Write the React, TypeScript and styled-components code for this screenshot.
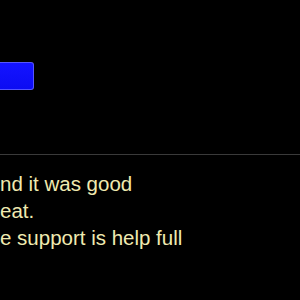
import React from 'react';
import styled, { createGlobalStyle } from 'styled-components';

const GlobalStyle = createGlobalStyle`
  html, body {
    margin: 0;
    padding: 0;
    background: #000;
  }
  body {
    font-family: 'Liberation Sans', Arial, sans-serif;
    overflow: hidden;
  }
`;

const Page = styled.div`
  width: 300px;
  height: 300px;
  background: #000;
  display: flex;
  flex-direction: column;
  padding-top: 62px;
  box-sizing: border-box;
`;

const SubmitButton = styled.button`
  width: 34px;
  height: 28px;
  padding: 0;
  background: linear-gradient(#1414ff, #0c0cf2);
  border: 1px solid #5555ff;
  border-left: none;
  border-radius: 0 3px 3px 0;
  cursor: pointer;
`;

const Divider = styled.hr`
  margin: 64px 0 0;
  border: none;
  border-top: 1px solid #3a3a3a;
  width: 100%;
`;

const Reviews = styled.div`
  display: flex;
  flex-direction: column;
  margin-top: 15px;
`;

const ReviewLine = styled.p`
  margin: 0;
  font-size: 20.5px;
  line-height: 27px;
  color: #f0eab0;
  white-space: nowrap;
`;

const reviews = ['nd it was good', 'eat.', 'e support is help full'];

export default function App() {
  return (
    <>
      <GlobalStyle />
      <Page>
        <SubmitButton aria-label="Submit" />
        <Divider />
        <Reviews>
          {reviews.map((r) => (
            <ReviewLine key={r}>{r}</ReviewLine>
          ))}
        </Reviews>
      </Page>
    </>
  );
}
